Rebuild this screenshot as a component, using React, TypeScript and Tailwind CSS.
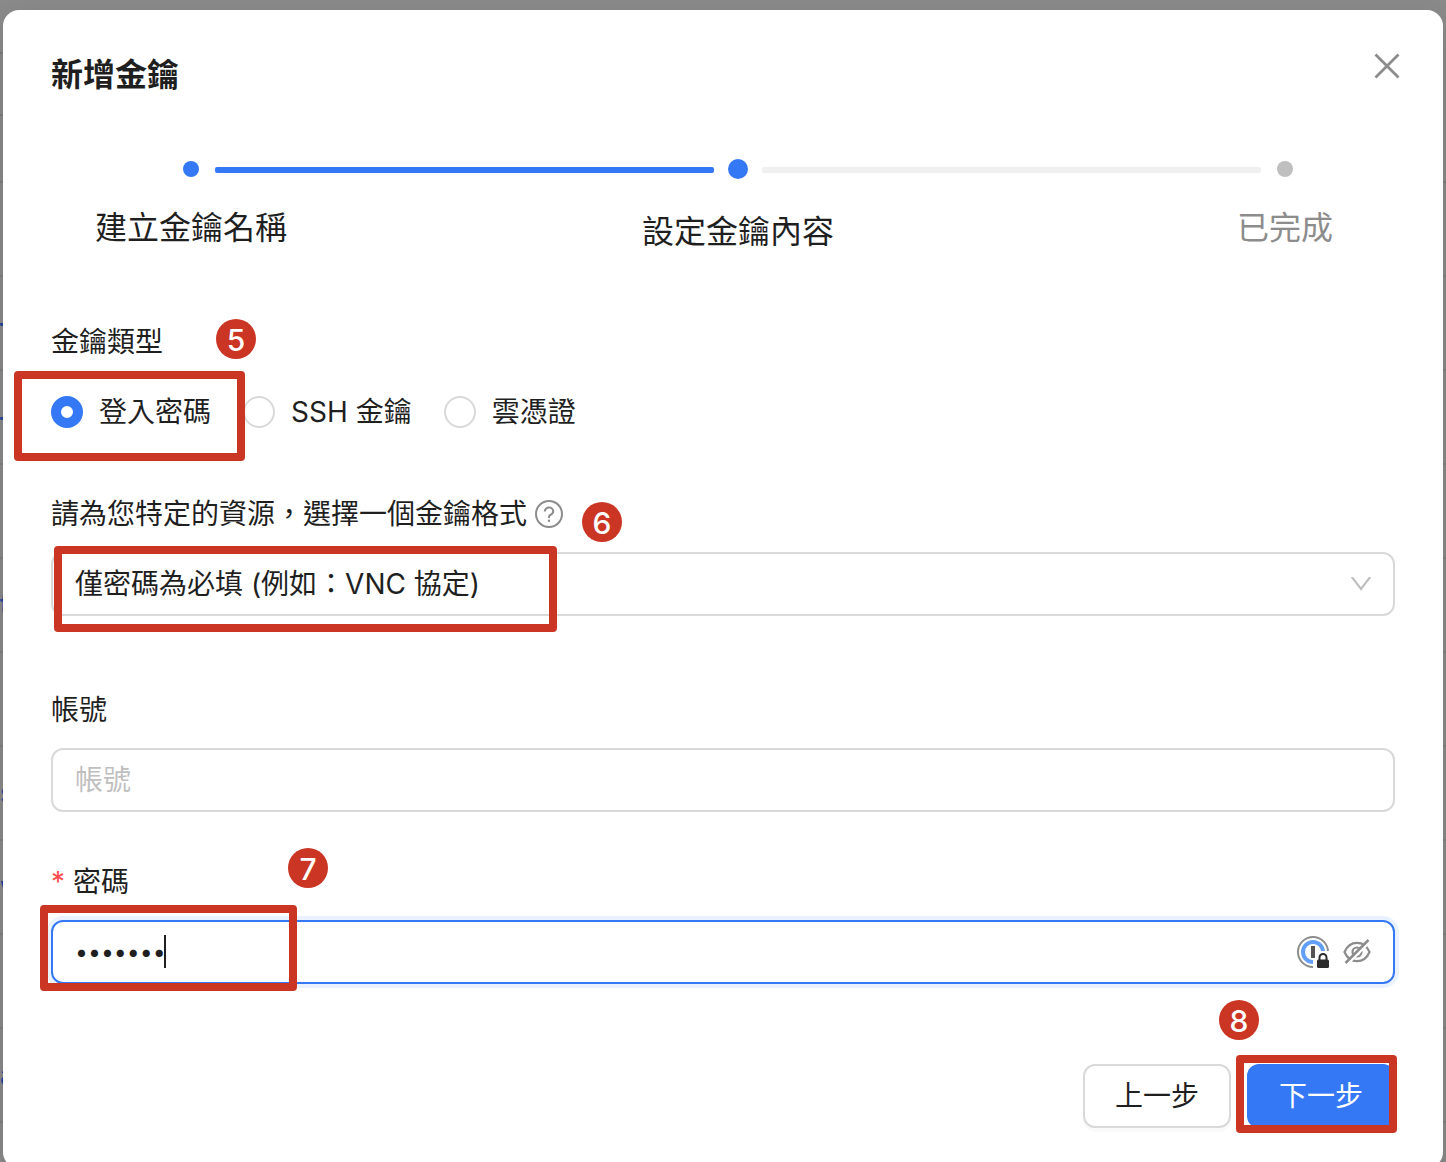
import React, { useState } from 'react';
import { clsx } from 'clsx';

const steps = [
  { title: '建立金鑰名稱', status: 'finish' },
  { title: '設定金鑰內容', status: 'process' },
  { title: '已完成', status: 'wait' },
];

const keyTypes = [
  { value: 'password', label: '登入密碼' },
  { value: 'ssh', label: 'SSH 金鑰' },
  { value: 'cloud', label: '雲憑證' },
];

// First letters of the key list that stay visible beside the dialog
const listRows = ['', '–', '–', '', 't', '', 's', 'w', '', 'a'];

function Backdrop() {
  return (
    <div aria-hidden="true" className="absolute inset-0 overflow-hidden text-[#1b479c]">
      <div className="h-[54px] w-8 border-b-2 border-[#7c7c7c]" />
      <div className="h-[62px] w-8 border-b-2 border-[#7c7c7c]" />
      <div className="h-[67px] border-b-2 border-[#7c7c7c]" />
      {listRows.map((text, index) => (
        <div key={index} className="flex h-[94px] items-center border-b-2 border-[#7f7f7f] font-medium">
          {text}
        </div>
      ))}
    </div>
  );
}

function Marker({ className, children }: { className: string; children: React.ReactNode }) {
  return (
    <span
      className={clsx(
        'pointer-events-none absolute z-20 flex size-10 items-center justify-center rounded-full bg-[#cb3524] pt-[2px] text-[30px] leading-none font-medium text-white',
        className
      )}
    >
      {children}
    </span>
  );
}

function Highlight({ className }: { className: string }) {
  return (
    <span
      className={clsx(
        'pointer-events-none absolute z-10 rounded-[4px] border-8 border-[#cb3524]',
        className
      )}
    />
  );
}

function Steps() {
  return (
    <div className="mt-[61px]">
      {/* Track */}
      <div className="flex items-center gap-[14px] pr-[100px] pl-[130px]">
        {steps.map((step, index) => (
          <React.Fragment key={step.title}>
            {index > 0 && (
              <span
                className={clsx(
                  'mt-[2px] h-[6px] flex-1 rounded-[2px]',
                  index === 1 ? 'bg-[#3478f6]' : 'bg-[#f0f0f0]'
                )}
              />
            )}
            <span className="flex size-5 items-center justify-center">
              <span
                className={clsx(
                  'rounded-full',
                  step.status === 'process' ? 'size-5' : 'size-4',
                  step.status === 'wait' ? 'bg-[#bfbfbf]' : 'bg-[#3478f6]'
                )}
              />
            </span>
          </React.Fragment>
        ))}
      </div>

      {/* Titles */}
      <ol className="mt-[25px] -mr-[30px] flex justify-between text-[32px] leading-[48px]">
        {steps.map((step) => (
          <li
            key={step.title}
            className={clsx(
              'w-[280px] text-center',
              step.status === 'process' && 'mt-1',
              step.status === 'wait' && 'text-[#8c8c8c]'
            )}
          >
            {step.title}
          </li>
        ))}
      </ol>
    </div>
  );
}

function OnePasswordIcon() {
  return (
    <svg viewBox="0 0 32 32" className="size-8" aria-hidden="true">
      <circle cx="16" cy="16" r="15" fill="#fff" stroke="#8c8c8c" strokeWidth="2" />
      <circle cx="16" cy="16" r="10" fill="#fff" stroke="#629ffb" strokeWidth="4" />
      <rect x="14" y="10" width="4" height="12" fill="#555" />
      <path d="M16 23h3v-4l4-4h9v17H16z" fill="#fff" />
      <path d="M22.500 24v-2.500a3.500 3.500 0 0 1 7 0V24" fill="none" stroke="#2b2b2b" strokeWidth="2" />
      <rect x="20" y="23.500" width="12" height="8.500" rx="1.500" fill="#2b2b2b" />
    </svg>
  );
}

function EyeOffIcon() {
  return (
    <svg viewBox="0 0 28 28" className="size-7" fill="none" stroke="#8c8c8c" strokeWidth="2.200" aria-hidden="true">
      <path d="M1.500 14C4 8 8.500 4.800 14 4.800S24 8 26.500 14C24 20 19.500 23.200 14 23.200S4 20 1.500 14z" />
      <circle cx="14" cy="14" r="4.500" />
      <path d="M4.500 26 27 3.500" stroke="#fff" strokeWidth="2.500" />
      <path d="M2.500 25 25.500 2" strokeWidth="2.500" />
    </svg>
  );
}

export default function App() {
  const [keyType, setKeyType] = useState('password');
  const [account, setAccount] = useState('');
  const [password, setPassword] = useState('1234567');

  return (
    <div
      lang="zh-Hant"
      className="relative h-screen overflow-hidden bg-[#8a8a8a] pt-[10px] font-['Inter','Noto_Sans_CJK_TC',sans-serif] text-[28px] leading-[44px] text-[#1f1f1f]"
    >
      <Backdrop />

      <section
        role="dialog"
        aria-labelledby="dialog-title"
        className="relative mx-[3px] rounded-[16px] bg-white px-12 pt-10 pb-10 shadow-[0_12px_32px_0_rgba(0,0,0,0.12)]"
      >
        <h1 id="dialog-title" className="text-[32px] leading-[50px] -mb-[2px] font-semibold">
          新增金鑰
        </h1>
        <button
          type="button"
          aria-label="關閉"
          className="absolute top-[34px] right-[34px] flex size-11 items-center justify-center"
        >
          <svg viewBox="0 0 24 24" className="size-6 overflow-visible" stroke="#8c8c8c" strokeWidth="2.800" aria-hidden="true">
            <path d="M.5.5l23 23M23.500.5l-23 23" />
          </svg>
        </button>

        <Steps />

        <form className="mt-16" onSubmit={(e) => e.preventDefault()}>
          {/* Key type */}
          <div role="radiogroup" aria-labelledby="key-type" className="relative">
            <p id="key-type">金鑰類型</p>
            <Marker className="-top-[1px] left-[165px]">5</Marker>
            <div className="mt-4 flex h-16 items-center gap-8">
              {keyTypes.map((type) => (
                <label key={type.value} className="flex items-center gap-4">
                  <input
                    type="radio"
                    name="keyType"
                    value={type.value}
                    checked={keyType === type.value}
                    onChange={() => setKeyType(type.value)}
                    className="size-8 appearance-none rounded-full border-2 border-[#d9d9d9] bg-white checked:border-[10px] checked:border-[#3478f6]"
                  />
                  {type.label}
                </label>
              ))}
            </div>
            <Highlight className="top-[51px] -left-[37px] h-[90px] w-[231px]" />
          </div>

          {/* Key format */}
          <div className="relative mt-12">
            <div className="flex items-center gap-2">
              <label htmlFor="format">請為您特定的資源，選擇一個金鑰格式</label>
              <svg viewBox="0 0 28 28" className="size-7" fill="none" stroke="#8c8c8c" strokeWidth="2" aria-hidden="true">
                <circle cx="14" cy="14" r="13" />
                <path d="M9.800 11.500c0-2.300 1.800-3.900 4.200-3.900s4.200 1.600 4.200 3.700c0 1.700-1 2.800-2.500 3.400-1.200.5-1.700 1.200-1.700 2.300v1" />
                <circle cx="14" cy="20.800" r="1.200" fill="#8c8c8c" stroke="none" />
              </svg>
            </div>
            <Marker className="top-[10px] left-[531px]">6</Marker>
            <div className="relative mt-4">
              <select
                id="format"
                className="block h-16 w-full appearance-none rounded-[12px] border-2 border-[#d9d9d9] bg-white px-[22px] outline-none"
              >
                <option>僅密碼為必填 (例如：VNC 協定)</option>
              </select>
              <svg
                viewBox="0 0 20 14"
                className="pointer-events-none absolute top-[25px] right-6 h-[14px] w-5"
                fill="none"
                stroke="#bfbfbf"
                strokeWidth="2.200"
                aria-hidden="true"
              >
                <path d="M.8 0 10 12 19.200 0" />
              </svg>
              <Highlight className="-top-[6px] left-[3px] h-[86px] w-[503px]" />
            </div>
          </div>

          {/* Account */}
          <div className="mt-[72px]">
            <label htmlFor="account" className="block">帳號</label>
            <input
              id="account"
              type="text"
              placeholder="帳號"
              value={account}
              onChange={(e) => setAccount(e.target.value)}
              className="mt-4 block h-16 w-full rounded-[12px] border-2 border-[#d9d9d9] px-[22px] outline-none placeholder:text-[#bfbfbf]"
            />
          </div>

          {/* Password */}
          <div className="relative mt-12">
            <label htmlFor="password" className="flex gap-2">
              <span className="text-[#ff4d4f]">*</span>
              密碼
            </label>
            <Marker className="-top-[12px] left-[237px]">7</Marker>
            <div className="relative mt-4">
              <input
                id="password"
                type="password"
                value={password}
                onChange={(e) => setPassword(e.target.value)}
                className="block h-16 w-full rounded-[12px] border-2 border-[#3478f6] pr-[110px] pl-[22px] text-[23px] ring-4 ring-[#e9f2fe] outline-none"
              />
              <span className="pointer-events-none absolute top-[15px] left-[113px] h-[33px] w-[2px] bg-[#1f1f1f]" />
              <div className="absolute inset-y-0 right-6 flex items-center gap-[14px]">
                <OnePasswordIcon />
                <button type="button" aria-label="顯示密碼">
                  <EyeOffIcon />
                </button>
              </div>
              <Highlight className="-top-[15px] -left-[11px] h-[86px] w-[257px]" />
            </div>
          </div>

          {/* Footer */}
          <div className="mt-20 flex justify-end gap-4">
            <button
              type="button"
              className="h-16 rounded-[12px] border-2 border-[#d9d9d9] bg-white px-[30px] shadow-[0_4px_0_rgba(0,0,0,0.02)]"
            >
              上一步
            </button>
            <div className="relative">
              <button type="submit" className="h-16 rounded-[12px] bg-[#3478f6] px-8 text-white">
                下一步
              </button>
              <Marker className="-top-16 -left-7">8</Marker>
              <Highlight className="-top-[9px] -left-[11px] h-[78px] w-[161px]" />
            </div>
          </div>
        </form>
      </section>
    </div>
  );
}
